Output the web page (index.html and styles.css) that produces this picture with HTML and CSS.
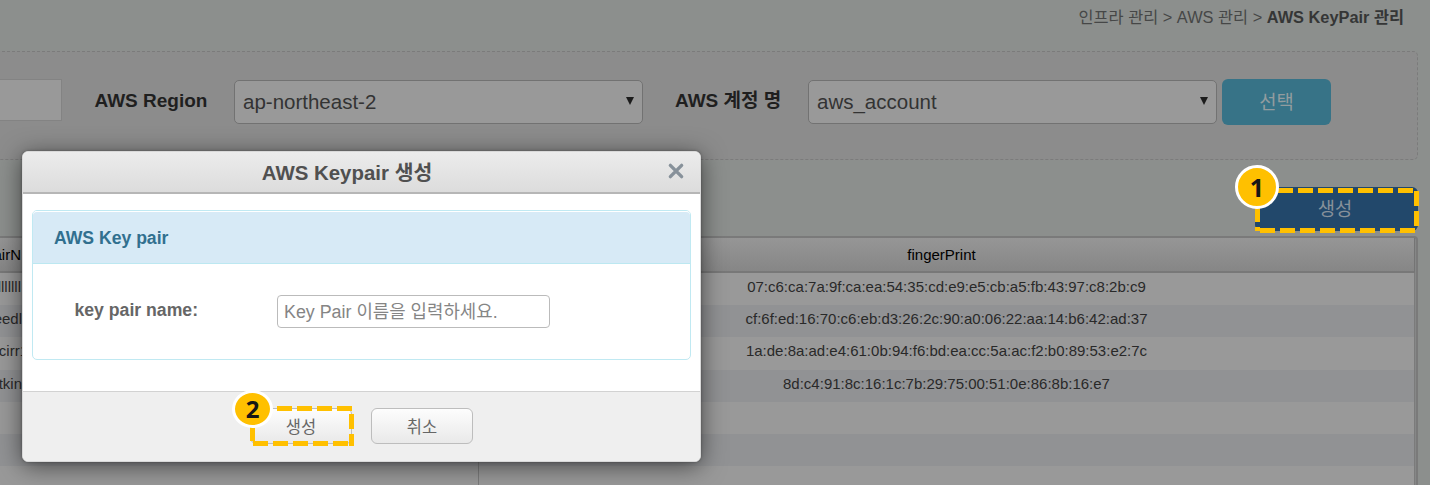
FILE: index.html
```html
<!DOCTYPE html>
<html lang="ko">
<head>
<meta charset="utf-8">
<title>AWS KeyPair 관리</title>
<link rel="stylesheet" href="styles.css">
</head>
<body>
<main class="page">
  <nav class="crumbs"><span>인프라 관리 &gt; AWS 관리 &gt; <b>AWS KeyPair 관리</b></span></nav>
  <section class="filters">
    <div class="field-end"></div>
    <span class="label region-label">AWS Region</span>
    <div class="select"><span>ap-northeast-2</span><svg class="arrow" viewBox="0 0 8 8"><path d="M0 0h8L4 8z"/></svg></div>
    <span class="label account-label">AWS 계정 명</span>
    <div class="select"><span>aws_account</span><svg class="arrow" viewBox="0 0 8 8"><path d="M0 0h8L4 8z"/></svg></div>
    <button class="choose">선택</button>
  </section>
  <div class="actions">
    <button class="create">생성</button>
    <svg class="mark mark-one" width="168" height="47"><path d="M26 3.500H164M164.500 4v38M5.500 20v24M8 43.500H165"/></svg>
    <span class="badge badge-one">1</span>
  </div>
  <section class="table">
    <div class="row head"><div class="name">airN</div><div class="print">fingerPrint</div></div>
    <div class="body">
      <div class="row"><div class="name">lllllll</div><div class="print">07:c6:ca:7a:9f:ca:ea:54:35:cd:e9:e5:cb:a5:fb:43:97:c8:2b:c9</div></div>
      <div class="row"><div class="name name-mid">eedl</div><div class="print">cf:6f:ed:16:70:c6:eb:d3:26:2c:90:a0:06:22:aa:14:b6:42:ad:37</div></div>
      <div class="row"><div class="name name-wide">cirr1</div><div class="print">1a:de:8a:ad:e4:61:0b:94:f6:bd:ea:cc:5a:ac:f2:b0:89:53:e2:7c</div></div>
      <div class="row"><div class="name name-mid">tkin</div><div class="print">8d:c4:91:8c:16:1c:7b:29:75:00:51:0e:86:8b:16:e7</div></div>
      <div class="row"><div class="name"></div><div class="print"></div></div>
      <div class="row"><div class="name"></div><div class="print"></div></div>
      <div class="row"><div class="name"></div><div class="print"></div></div>
    </div>
  </section>

  <section class="dialog">
    <header class="dialog-head">
      <h1>AWS Keypair 생성</h1>
      <svg class="close" viewBox="0 0 16 16"><path d="M3 3l10 10M13 3L3 13"/></svg>
    </header>
    <div class="dialog-body">
      <div class="card">
        <h2>AWS Key pair</h2>
        <div class="form">
          <label for="kp">key pair name:</label>
          <input id="kp" placeholder="Key Pair 이름을 입력하세요.">
        </div>
      </div>
    </div>
    <footer class="dialog-foot">
      <div class="marked">
        <button class="btn">생성</button>
        <svg class="mark mark-two" width="104" height="40"><path d="M27 2.500H104M101.500 8v32M2.500 20v17.500M3 37.500H104"/></svg>
        <span class="badge badge-two">2</span>
      </div>
      <button class="btn">취소</button>
    </footer>
  </section>
</main>
</body>
</html>
```
FILE: styles.css
```css
* { box-sizing: border-box; }
body {
  margin: 0;
  background: #8c8f8d;
  font-family: "Liberation Sans", "Noto Sans CJK KR", sans-serif;
}
button, input { font-family: inherit; margin: 0; }
.page { position: relative; width: 1430px; height: 485px; overflow: hidden; }

.crumbs {
  height: 51px;
  padding: 5px 26px 0 0;
  text-align: right;
  font-size: 16.350px;
  line-height: 24px;
  color: #464747;
}
.crumbs b { color: #353636; }

.filters {
  display: flex;
  height: 109px;
  margin: 0 12px 0 -8px;
  padding: 28px 0 0 8px;
  border: 1px dashed #7b7b7b;
  border-radius: 5px;
  background: #8c8c8c;
}
.field-end {
  width: 62px;
  height: 42px;
  margin: -1px 0 0 -1px;
  border: 1px solid #838383;
  border-left: 0;
  background: #999;
}
.label {
  font-weight: bold;
  font-size: 19px;
  line-height: 41px;
  white-space: nowrap;
  color: #1f1f1f;
}
.region-label { width: 172px; padding-left: 32.500px; }
.account-label { width: 165px; padding-left: 32px; }
.select {
  display: flex;
  justify-content: space-between;
  width: 409px;
  height: 44px;
  padding: 0 8px;
  border: 1.500px solid #727272;
  border-radius: 5px;
  background: #999;
  color: #333;
  font-size: 20.500px;
  line-height: 42px;
}
.arrow { width: 8px; height: 8px; margin: 16px 0 0 0; fill: #1c1c1c; }
.choose {
  width: 109px;
  height: 46px;
  margin: -1px 0 0 5px;
  padding: 0 0 3px;
  border: 0;
  border-radius: 6px;
  background: #377387;
  color: #929c9f;
  font-size: 18.800px;
}

.actions {
  position: relative;
  display: flex;
  justify-content: flex-end;
  height: 76px;
  padding: 27px 12px 0 0;
}
.create {
  width: 163px;
  height: 44px;
  padding: 0 3px 4px 0;
  border: 0;
  border-radius: 6px;
  background: #22486b;
  color: #87919a;
  font-size: 18.800px;
}
.mark { position: absolute; fill: none; stroke: #ffc000; stroke-width: 5; stroke-dasharray: 15 5; }
.mark-one { left: 1252px; top: 27px; }
.badge {
  position: absolute;
  display: grid;
  place-items: center;
  border: 3px solid #fff;
  border-radius: 50%;
  background: #ffc000;
  color: #161616;
  font-family: "Noto Sans", sans-serif;
  font-weight: bold;
}
.badge-one { left: 1235px; top: 5px; width: 44px; height: 44px; font-size: 25px; line-height: 32px; }

.table {
  height: 260px;
  margin: 0 12px 0 -8px;
  border: 2px solid #7a7a7a;
  border-radius: 4px;
  padding-right: 1px;
  background: #868787;
}
.row { display: flex; height: 32.200px; font-size: 15px; line-height: 27px; color: #292929; }
.head {
  height: 35px;
  border-right: 1px solid #747474;
  border-bottom: 2px solid #787878;
  background: linear-gradient(#969696, #868686);
  color: #000;
  line-height: 34px;
}
.body { border-right: 1px solid #7b7b7b; background: #999; }
.body .row:nth-child(even) { background: #919294; }
.name {
  display: flex;
  justify-content: flex-end;
  width: 485px;
  padding-right: 457px;
  border-right: 1px solid #7b7b7b;
  white-space: nowrap;
}
.name-mid { padding-right: 456px; }
.name-wide { padding-right: 450px; }
.print { flex: 1; text-align: center; }
.head .print { padding-right: 10px; }

.dialog {
  position: absolute;
  left: 22px;
  top: 151px;
  width: 679px;
  height: 311px;
  border: 1px solid #d9d9d9;
  border-radius: 6px;
  background: #fff;
  box-shadow: 0 4px 24px rgba(0, 0, 0, .55), 0 0 3px rgba(0, 0, 0, .3);
}
.dialog-head {
  position: relative;
  height: 42px;
  border-bottom: 2px solid #b6b6b6;
  border-radius: 5px 5px 0 0;
  background: linear-gradient(#ececec, #dcdcdc);
}
.dialog-head h1 {
  margin: 0;
  padding-right: 29px;
  text-align: center;
  font-size: 20.450px;
  line-height: 42px;
  color: #505050;
}
.close {
  position: absolute;
  right: 15px;
  top: 10px;
  width: 18px;
  height: 18px;
  fill: none;
  stroke: #87919a;
  stroke-width: 3;
  stroke-linecap: round;
}
.dialog-body { height: 197px; padding: 16px 9px 0; }
.card { height: 150px; border: 1.500px solid #c0e9f2; border-radius: 5px; }
.card h2 {
  height: 53px;
  margin: 0;
  padding-left: 21px;
  border-top: 1px solid #fff;
  border-bottom: 1px solid #bce8f1;
  border-radius: 4px 4px 0 0;
  background: #d7eaf6;
  color: #31708f;
  font-size: 17.600px;
  line-height: 52px;
}
.form { display: flex; padding: 31px 0 0 41.500px; }
.form label { width: 202.500px; font-size: 17.650px; font-weight: bold; line-height: 31px; color: #666; }
.form input {
  width: 273px;
  height: 33px;
  padding: 2px 6px 0;
  border: 1.500px solid #bbb;
  border-radius: 4px;
  background: #fff;
  font-size: 17.850px;
}
.form input::placeholder { color: #858585; opacity: 1; }
.dialog-foot {
  display: flex;
  gap: 19px;
  height: 70px;
  padding: 16px 0 0 227px;
  border-top: 1px solid #d2d2d2;
  border-radius: 0 0 5px 5px;
  background: #efefef;
}
.marked { position: relative; }
.btn {
  width: 102px;
  height: 36px;
  padding: 0 0 1px;
  border: 1.500px solid #bdbdbd;
  border-radius: 6px;
  background: linear-gradient(#fdfdfd, #e9e9e9);
  color: #666;
  font-size: 16.500px;
}
.mark-two { left: 0; top: -2px; }
.badge-two { left: -18px; top: -18px; width: 41px; height: 38px; font-size: 24px; line-height: 30px; }
```
